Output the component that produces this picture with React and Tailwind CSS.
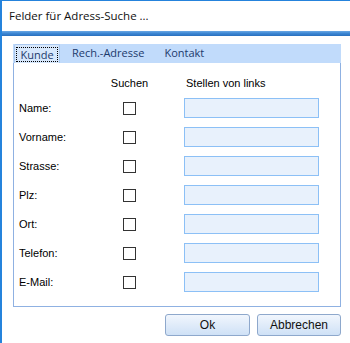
import React from 'react';

const fields = ['Name:', 'Vorname:', 'Strasse:', 'Plz:', 'Ort:', 'Telefon:', 'E-Mail:'];
const tabs = ['Kunde', 'Rech.-Adresse', 'Kontakt'];

export default function App() {
  return (
    <div className="w-[350px] h-[343px] bg-white border-l-2 border-t border-[#2583dc] font-['Liberation_Sans',Arial,sans-serif] text-[11px] text-black overflow-hidden">
      {/* title bar */}
      <div className="h-[30px] flex items-center pl-[7px] font-['Open_Sans',sans-serif] text-[11.5px] text-[#111]">
        Felder für Adress-Suche ...
      </div>
      <div className="h-[5px] bg-gradient-to-b from-[#6aa8e4] via-[#3b86d3] to-[#2a70bd]" />

      <div className="pt-[8px] pl-[11px]">
        <div className="w-[328px]">
          {/* tabs */}
          <div className="h-[19px] bg-[#c1dbfb] flex items-end font-['Open_Sans',sans-serif] text-[11px] text-[#1c3a6c]">
            {tabs.map((t, i) =>
              i === 0 ? (
                <div key={t} className="h-[19px] w-[46px] ml-[1px] bg-[#d6e7fc] border border-b-0 border-[#aac8ee] rounded-t-[2px] flex items-center justify-center">
                  <span className="px-[3px] leading-[13px] border border-dotted border-black">{t}</span>
                </div>
              ) : (
                <div key={t} className={`h-[19px] flex items-center ${i === 1 ? 'ml-[12px]' : 'ml-[20px]'}`}>
                  {t}
                </div>
              )
            )}
          </div>

          {/* panel */}
          <div className="border-x border-b border-[#8fb1e2] pl-[5px] pt-[13px] pb-[14px]">
            <div className="grid grid-cols-[104px_13px_48px_135px] items-center">
              <div className="h-[14px]" />
              <div className="h-[14px] flex justify-center whitespace-nowrap leading-[14px]">Suchen</div>
              <div className="h-[14px]" />
              <div className="h-[14px] pl-[2px] whitespace-nowrap leading-[14px]">Stellen von links</div>
            </div>
            <div className="mt-[8px] flex flex-col gap-[9px]">
              {fields.map((f) => (
                <div key={f} className="grid grid-cols-[104px_13px_48px_135px] items-center h-[20px]">
                  <div className="pt-[1px]">{f}</div>
                  <div className="w-[13px] h-[13px] border border-[#333] bg-white" />
                  <div />
                  <div className="h-[20px] bg-[#e8f1fc] border border-[#8cc0f6]" />
                </div>
              ))}
            </div>
          </div>

          {/* buttons */}
          <div className="mt-[7px] flex justify-end gap-[7px] text-[12px] text-[#111]">
            <button className="w-[85px] h-[22px] rounded-[3px] border border-[#8ea8cc] bg-gradient-to-b from-[#f1f6fd] to-[#cfe1f6] flex items-center justify-center">
              Ok
            </button>
            <button className="w-[84px] h-[22px] rounded-[3px] border border-[#8ea8cc] bg-gradient-to-b from-[#f1f6fd] to-[#cfe1f6] flex items-center justify-center">
              Abbrechen
            </button>
          </div>
        </div>
      </div>
    </div>
  );
}
